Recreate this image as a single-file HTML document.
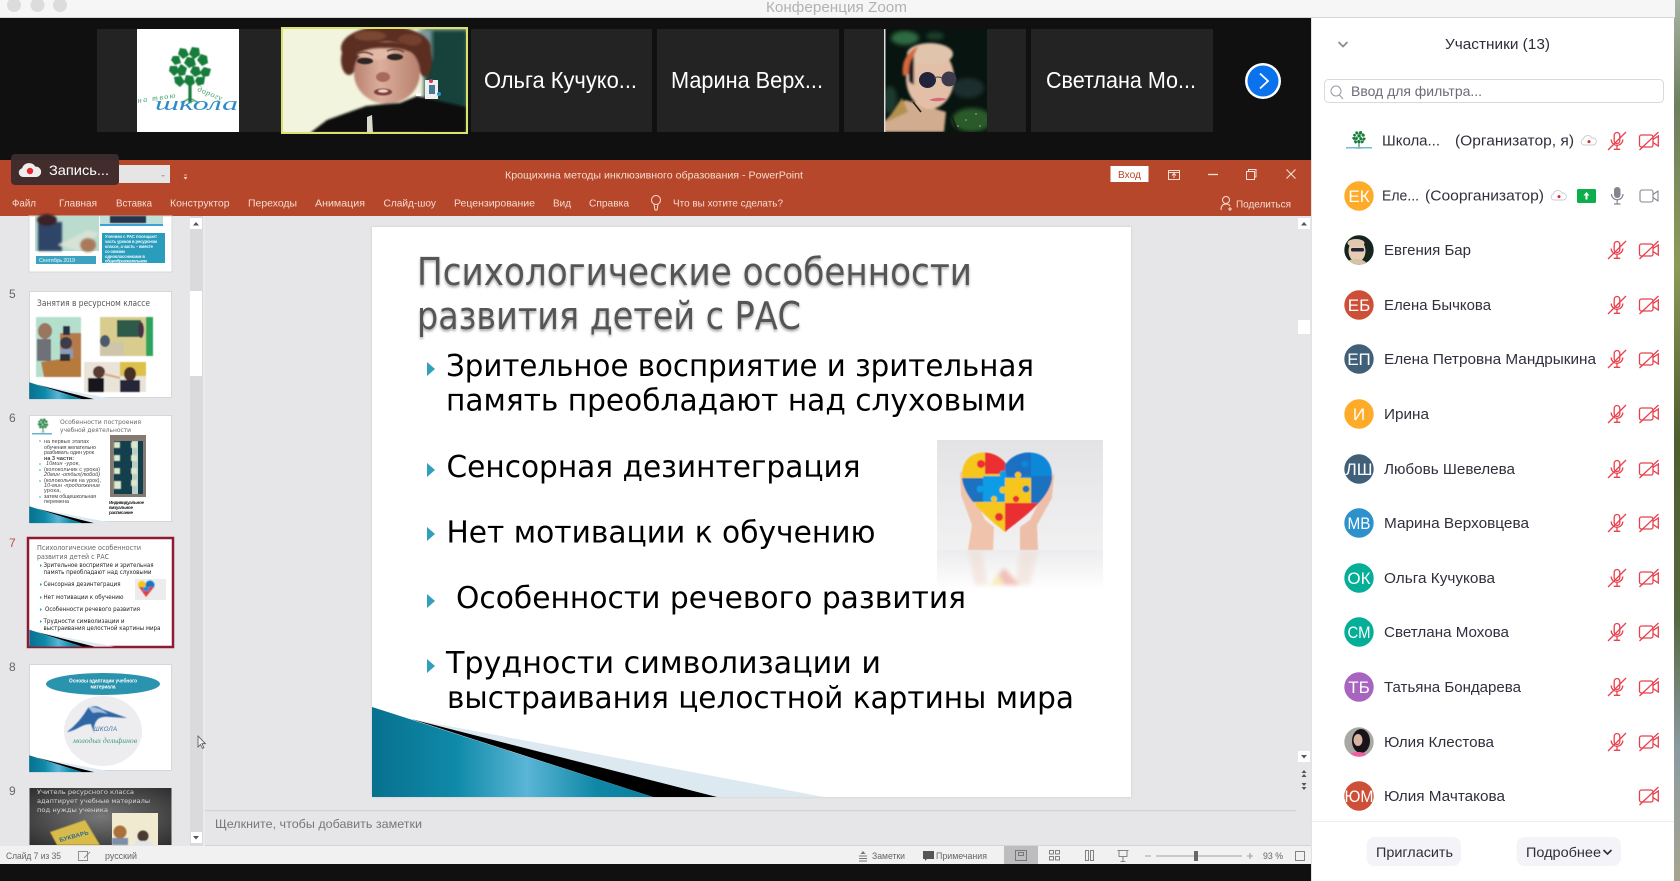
<!DOCTYPE html>
<html lang="ru"><head><meta charset="utf-8"><title>Конференция Zoom</title>
<style>
html,body{margin:0;padding:0;width:1680px;height:881px;overflow:hidden;background:#111}
svg{display:block;position:absolute;left:0;top:0;filter:blur(.35px)}
text{font-family:"Liberation Sans","Noto Sans CJK SC",sans-serif}
.dj{font-family:"DejaVu Sans","Liberation Sans",sans-serif}
.n{font-size:15px;fill:#30303c;transform:translateY(-.5px)}
.av{font-size:17px;fill:#fff;text-anchor:middle}
.tab{font-size:10.5px;fill:#f4dcd2;transform:translateY(-.5px)}
.st{font-size:9.5px;fill:#666}
.tile{font-size:23px;fill:#fff}
.b{fill:#000;font-size:30px}
.t{fill:#555;font-size:38px}
.s{font-size:6.3px;fill:#222}
.s6{font-size:5.4px;fill:#444}
</style></head><body>
<svg width="1680" height="881" viewBox="0 0 1680 881" xmlns="http://www.w3.org/2000/svg">
<defs>
<linearGradient id="teal" x1="0" y1="0" x2="1" y2="0"><stop offset="0" stop-color="#08708f"/><stop offset=".3" stop-color="#0f8aa9"/><stop offset=".55" stop-color="#5ab5d6"/><stop offset=".8" stop-color="#0f87a6"/><stop offset="1" stop-color="#0a7f9f"/></linearGradient>
<linearGradient id="wall" x1="0" y1="0" x2="0" y2="1"><stop offset="0" stop-color="#a8b3a5"/><stop offset=".12" stop-color="#6d7f5e"/><stop offset=".3" stop-color="#8d9a58"/><stop offset=".5" stop-color="#4e5e2e"/><stop offset=".7" stop-color="#56683f"/><stop offset=".85" stop-color="#8a9aa2"/><stop offset="1" stop-color="#a6a48e"/></linearGradient>
<linearGradient id="ph" x1="0" y1="0" x2="0" y2="1"><stop offset="0" stop-color="#e3e3e6"/><stop offset="1" stop-color="#f1f1f2"/></linearGradient>
<linearGradient id="refl" x1="0" y1="0" x2="0" y2="1"><stop offset="0" stop-color="#ececee"/><stop offset="1" stop-color="#fff"/></linearGradient>
<radialGradient id="dark9" cx=".5" cy=".5" r=".7"><stop offset="0" stop-color="#777"/><stop offset="1" stop-color="#2e2e2e"/></radialGradient>
<linearGradient id="skin" x1="0" y1="0" x2="1" y2="0"><stop offset="0" stop-color="#b98270"/><stop offset=".4" stop-color="#dcae9c"/><stop offset="1" stop-color="#b8806e"/></linearGradient>
<filter id="b1" x="-20%" y="-20%" width="140%" height="140%"><feGaussianBlur stdDeviation="1.1"/></filter>
<filter id="b2" x="-20%" y="-20%" width="140%" height="140%"><feGaussianBlur stdDeviation="2.2"/></filter>
<filter id="b5" x="-20%" y="-20%" width="140%" height="140%"><feGaussianBlur stdDeviation=".5"/></filter>
<filter id="sh" x="-5%" y="-20%" width="110%" height="150%"><feGaussianBlur in="SourceAlpha" stdDeviation="1.4"/><feOffset dy="2"/><feComponentTransfer><feFuncA type="linear" slope=".35"/></feComponentTransfer><feMerge><feMergeNode/><feMergeNode in="SourceGraphic"/></feMerge></filter>
<g id="mic" fill="none" stroke="#e8404c" stroke-width="1.300"><rect x="-2.800" y="-8.500" width="5.600" height="11" rx="2.800"/><path d="M-5.800-1.500a5.800 5.800 0 0 0 11.600 0M0 4.500V8M-3.200 8.300H3.200M-9 9 9-9"/></g>
<g id="cam" fill="none" stroke="#e8404c" stroke-width="1.300"><rect x="-9.500" y="-6" width="13.500" height="12" rx="2"/><path d="M4-1.500 9.300-5V5L4 1.500M-9.500 9 9.500-9"/></g>
<g id="cloud"><path d="M-5 4a3 3 0 0 1-.6-5.900 4.600 4.600 0 0 1 8.600-1A3.400 3.400 0 0 1 4.600 4Z" fill="#fff" stroke="#c9c9d4" stroke-width=".9"/><circle r="1.500" cy=".6" fill="#e5202e"/></g>
<g id="wedge"><polygon points="411,719 824,797 717,797" fill="#dde9f1"/><polygon points="411,719 717,797 653,797" fill="#000"/><polygon points="372,707 653,797 372,797" fill="url(#teal)"/></g>
<g id="tree">
<rect x="-1.600" y="8" width="3.200" height="26" fill="#167a3a"/>
<path d="M-1.500 30-9 34M1.500 30 9 34" stroke="#167a3a" stroke-width="1.200"/>
<g fill="#157d3a">
<path d="M-10-21-4-20-1-14-7-10-12-15Z"/><path d="M2-22 9-21 10-14 4-10-1-15Z"/><path d="M-17-13-11-13-9-6-15-4-19-9Z"/><path d="M-3-12 4-11 6-4-1-1-6-6Z"/><path d="M11-15 17-13 18-6 12-3 7-9Z"/>
<path d="M-20-3-13-3-11 3-16 7-21 2Z"/><path d="M-9-5-3-1-5 6-11 7-13 1Z"/><path d="M3-3 9-2 11 5 5 8 0 3Z"/><path d="M14-2 21 0 19 7 13 8 10 3Z"/><path d="M-16 8-9 7-5 13-10 18-15 14Z"/><path d="M-4 6 3 7 5 14 0 18-6 13Z"/><path d="M7 8 15 8 14 15 8 17 5 12Z"/>
</g></g>
</defs>

<rect width="1680" height="881" fill="#101010"/>
<rect x="1674" width="6" height="881" fill="url(#wall)"/>

<rect width="1675" height="18" fill="#f6f6f6"/>
<rect y="17" width="1675" height="1" fill="#d5d5d5"/>
<circle cx="14" cy="5" r="7" fill="#dcdcdc"/><circle cx="37.500" cy="5" r="7" fill="#dcdcdc"/><circle cx="60" cy="5" r="7" fill="#dcdcdc"/>
<text x="766" y="12" font-size="15" fill="#b2b2b2" textLength="141" lengthAdjust="spacingAndGlyphs">Конференция Zoom</text>

<rect x="0" y="18" width="1311" height="142" fill="#101010"/>
<rect x="97" y="29" width="184" height="103" fill="#232323"/>
<rect x="471" y="29" width="181" height="103" fill="#232323"/>
<rect x="657" y="29" width="182" height="103" fill="#232323"/>
<rect x="844" y="29" width="182" height="103" fill="#232323"/>
<rect x="1031" y="29" width="182" height="103" fill="#232323"/>

<rect x="137" y="29" width="102" height="103" fill="#fff"/>
<g filter="url(#b5)"><use href="#tree" x="190" y="69"/></g>
<text x="138" y="103" font-size="8" font-style="italic" fill="#3e9c62" style="font-family:'Liberation Serif',serif" transform="rotate(-8 138 103)" textLength="38">на твою</text>
<text x="197" y="91" font-size="8" font-style="italic" fill="#3e9c62" style="font-family:'Liberation Serif',serif" transform="rotate(22 197 91)" textLength="26">дорогу</text>
<text x="155" y="110" font-size="19" font-style="italic" fill="#2f8bc8" style="font-family:'Liberation Serif',serif" textLength="83" lengthAdjust="spacingAndGlyphs">школа</text>

<!-- active video -->
<rect x="282" y="28" width="185" height="105" fill="#f3f4de"/>
<clipPath id="v1"><rect x="283" y="29" width="183" height="103"/></clipPath>
<g clip-path="url(#v1)">
<rect x="424" y="29" width="44" height="103" fill="#17423a" filter="url(#b2)"/>
<rect x="418" y="29" width="14" height="30" fill="#7c9a9c" filter="url(#b2)"/>
<g filter="url(#b1)">
<ellipse cx="386" cy="48" rx="45" ry="22" fill="#5c2f22"/>
<ellipse cx="349" cy="60" rx="8" ry="15" fill="#5c2f22"/>
<ellipse cx="425" cy="60" rx="7" ry="17" fill="#5c2f22"/>
<ellipse cx="370" cy="36" rx="16" ry="5" fill="#7a4632"/>
<ellipse cx="410" cy="40" rx="12" ry="6" fill="#74402e"/>
<ellipse cx="387" cy="73" rx="33" ry="31" fill="url(#skin)"/>
<ellipse cx="375" cy="52" rx="18" ry="8" fill="#e2b8a6"/>
</g>
<path d="M352 50Q362 38 385 42 410 40 420 55 402 47 385 48 364 47 352 58Z" fill="#5c2f22" filter="url(#b1)"/>
<g filter="url(#b5)">
<ellipse cx="365" cy="61" rx="8" ry="3.200" fill="#2e2624"/>
<ellipse cx="395" cy="57" rx="8" ry="3.200" fill="#2e2624"/>
<path d="M356 54q9-4 17 1M387 51q9-4 17 1" stroke="#6a4436" stroke-width="1.500" fill="none"/>
<ellipse cx="383" cy="77" rx="7" ry="5" fill="#a86a5b"/>
<ellipse cx="383" cy="92" rx="9" ry="3.500" fill="#7f3f38"/>
<ellipse cx="383" cy="91" rx="5" ry="1.500" fill="#f1d8cc"/>
</g>
<g filter="url(#b1)">
<polygon points="310,133 327,120 366,106 385,104 400,103 417,96 466,107 466,133" fill="#0e0d10"/>
</g>
<polygon points="367,117 372,115 373,133 367,133" fill="#d9d9cd"/>
<rect x="425" y="80" width="13" height="19" fill="#eef0f0"/>
<circle cx="431" cy="81" r="2" fill="#d83a50"/>
<circle cx="439" cy="94" r="2" fill="#2a90d0"/>
<rect x="429" y="85" width="6" height="9" fill="#4a7a92"/>
<rect x="416" y="93" width="5" height="3" fill="#fff"/>
</g>
<rect x="282" y="28" width="185" height="105" fill="none" stroke="#dbe36c" stroke-width="2"/>

<text class="tile" x="484" y="88" textLength="153" lengthAdjust="spacingAndGlyphs">Ольга Кучуко...</text>
<text class="tile" x="671" y="88" textLength="152" lengthAdjust="spacingAndGlyphs">Марина Верх...</text>
<text class="tile" x="1046" y="88" textLength="150" lengthAdjust="spacingAndGlyphs">Светлана Мо...</text>

<!-- woman photo -->
<clipPath id="v2"><rect x="884" y="29" width="103" height="103"/></clipPath>
<g clip-path="url(#v2)">
<rect x="884" y="29" width="103" height="103" fill="#08140f"/>
<g filter="url(#b2)">
<ellipse cx="905" cy="38" rx="14" ry="7" fill="#2f6a42"/>
<ellipse cx="935" cy="36" rx="9" ry="4" fill="#1f3d2c"/>
<ellipse cx="968" cy="88" rx="16" ry="10" fill="#1a2e2e"/>
<ellipse cx="972" cy="120" rx="20" ry="12" fill="#2a5a2a"/>
<ellipse cx="890" cy="100" rx="7" ry="14" fill="#1c3a2e"/>
</g>
<g fill="#9fbf8f"><circle cx="966" cy="120" r=".8"/><circle cx="976" cy="114" r=".8"/><circle cx="958" cy="126" r=".8"/><circle cx="980" cy="126" r=".8"/></g>
<g filter="url(#b1)">
<polygon points="884,132 884,122 905,100 920,104 946,112 944,132" fill="#d2ac8e"/>
<path d="M902 98 886 122 908 112Z" fill="#b2914f"/>
<ellipse cx="930" cy="78" rx="24" ry="31" fill="#e2bfa6"/>
<ellipse cx="930" cy="54" rx="23" ry="11" fill="#e0c4ac"/>
<path d="M903 76Q900 56 918 46L913 58 909 74Z" fill="#d5683c"/>
<path d="M909 82Q907 62 914 56L914 85Z" fill="#1f1d22"/>
</g>
<ellipse cx="927.500" cy="80" rx="8.500" ry="8" fill="#22253a"/>
<ellipse cx="949" cy="79" rx="7.500" ry="7.500" fill="#3d3a4c"/>
<path d="M934 78q4-2 8 0" stroke="#444" fill="none"/>
<path d="M929 100q9 3 18-1-9-3-18 1Z" fill="#d46a7a"/>
<path d="M913 102l8 10M952 117l6 15" stroke="#1a1a14" stroke-width="1.500"/>
<rect x="884" y="29" width="1.500" height="103" fill="#ddd"/>
</g>

<circle cx="1263" cy="81" r="18" fill="#fff"/>
<circle cx="1263" cy="81" r="15.500" fill="#0b72ed"/>
<path d="M1260 73.500 1268 81 1260 88.500" fill="none" stroke="#fff" stroke-width="1.800"/>

<!-- PowerPoint -->
<rect x="0" y="160" width="1311" height="56" fill="#b7472a"/>
<rect x="0" y="216" width="1311" height="630" fill="#e6e6e8"/>
<rect x="0" y="846" width="1311" height="18" fill="#f1f1f1"/>
<rect x="0" y="864" width="1311" height="17" fill="#101010"/>

<rect x="119" y="165" width="51" height="18" fill="#e5e5e5"/>
<path d="M161 175l2 2 2-2" fill="#aaa"/>
<path d="M184 175h3M184 177l1.500 2 1.500-2" fill="#f0d5ca" stroke="#f0d5ca" stroke-width=".8"/>
<rect x="11" y="154" width="108" height="31" rx="4" fill="#3c2c2d" opacity=".94"/>
<path d="M23 177a4.500 4.500 0 0 1-1-8.800 7.500 7.500 0 0 1 13.500-1.500 5 5 0 0 1 1 10.300Z" fill="#eee"/>
<circle cx="30" cy="171" r="3.200" fill="#e8262f"/>
<text x="49" y="175" font-size="14" fill="#fff" textLength="60" lengthAdjust="spacingAndGlyphs">Запись...</text>

<text class="tab" x="505" y="179" textLength="298" lengthAdjust="spacingAndGlyphs">Крощихина методы инклюзивного образования  -  PowerPoint</text>
<rect x="1110.500" y="166" width="38" height="16" fill="#fff"/>
<text x="1118" y="178" font-size="10.500" fill="#b7472a" textLength="23" lengthAdjust="spacingAndGlyphs">Вход</text>
<g fill="none" stroke="#f6e0d6" stroke-width="1">
<rect x="1168.500" y="170.500" width="11" height="9"/><path d="M1168.500 172.500h11M1174 178v-4M1172 175.500l2-2 2 2"/>
<path d="M1208 174.500h10" stroke-width="1.300"/>
<rect x="1246.500" y="171.500" width="8" height="8"/><path d="M1248.500 171.500v-2h7.500v7.500h-1.500"/>
<path d="M1286.500 169.500l9 9M1295.500 169.500l-9 9" stroke-width="1.100"/>
<circle cx="656" cy="200" r="4.500"/><path d="M654 204.500 655 210h2l1-5.500"/>
<circle cx="1226" cy="200" r="3.500"/><path d="M1221 210q0-6 5-6 3 0 4 2M1230 207v4M1228 209h4"/>
</g>
<text class="tab" x="12" y="207" textLength="24" lengthAdjust="spacingAndGlyphs">Файл</text>
<text class="tab" x="59" y="207" textLength="38" lengthAdjust="spacingAndGlyphs">Главная</text>
<text class="tab" x="116" y="207" textLength="36" lengthAdjust="spacingAndGlyphs">Вставка</text>
<text class="tab" x="170" y="207" textLength="59.500" lengthAdjust="spacingAndGlyphs">Конструктор</text>
<text class="tab" x="248" y="207" textLength="49" lengthAdjust="spacingAndGlyphs">Переходы</text>
<text class="tab" x="315" y="207" textLength="50" lengthAdjust="spacingAndGlyphs">Анимация</text>
<text class="tab" x="383.500" y="207" textLength="52.500" lengthAdjust="spacingAndGlyphs">Слайд-шоу</text>
<text class="tab" x="454" y="207" textLength="81" lengthAdjust="spacingAndGlyphs">Рецензирование</text>
<text class="tab" x="553" y="207" textLength="18" lengthAdjust="spacingAndGlyphs">Вид</text>
<text class="tab" x="589" y="207" textLength="40" lengthAdjust="spacingAndGlyphs">Справка</text>
<text class="tab" x="673" y="207" textLength="110" lengthAdjust="spacingAndGlyphs">Что вы хотите сделать?</text>
<text class="tab" x="1236" y="208" textLength="55" lengthAdjust="spacingAndGlyphs">Поделиться</text>

<!-- left scrollbar -->
<rect x="190" y="216" width="13" height="630" fill="#dadadc"/>
<rect x="190" y="218" width="12" height="11" fill="#fff"/><path d="M193 225.500h6l-3-3.500Z" fill="#555"/>
<rect x="190" y="291" width="12" height="85" fill="#fff"/>
<rect x="191" y="832" width="11" height="11" fill="#fff"/><path d="M193 836h6l-3 3.500Z" fill="#555"/>
<rect x="203" y="216" width="2" height="630" fill="#eaeaec"/>

<g font-size="12" fill="#666">
<text x="9" y="298">5</text><text x="9" y="422">6</text><text x="9" y="547" fill="#c0503c">7</text><text x="9" y="671">8</text><text x="9" y="795">9</text>
</g>

<!-- slide 4 thumb -->
<rect x="29" y="216" width="143" height="56" fill="#fff" stroke="#d8d8d8"/>
<rect x="35" y="216" width="64" height="35" fill="#b9dccf"/>
<g filter="url(#b1)"><rect x="38" y="222" width="24" height="29" fill="#2f4468"/><ellipse cx="47" cy="220" rx="10" ry="6" fill="#3a2028"/><polygon points="58,245 88,230 99,233 80,251" fill="#d6e2d6"/><ellipse cx="88" cy="245" rx="8" ry="7" fill="#a9795a"/></g>
<rect x="100" y="216" width="63" height="10" fill="#bfe0d8"/><rect x="110" y="216" width="36" height="7" fill="#25344a" filter="url(#b5)"/><rect x="100" y="224" width="63" height="2" fill="#3ba3d8"/>
<rect x="102" y="233" width="63" height="30" fill="#2a9dbd"/>
<g font-size="4.200" font-weight="bold" fill="#e9f7fb"><text x="105" y="238" textLength="52">Ученики с РАС посещают</text><text x="105" y="243" textLength="52">часть уроков в ресурсном</text><text x="105" y="248" textLength="48">классе, а часть – вместе</text><text x="105" y="253" textLength="20">со своими</text><text x="105" y="258" textLength="40">одноклассниками в</text><text x="105" y="262.500" textLength="42">общеобразовательном</text></g>
<rect x="36" y="256" width="60" height="8" fill="#3ba3c0"/><text x="39" y="262" font-size="5.500" fill="#e9f7fb" textLength="36">Сентябрь 2019</text>

<!-- slide 5 -->
<rect x="29.500" y="291.500" width="142" height="106" fill="#fff" stroke="#d6d6d6"/>
<text x="37" y="306" font-size="8.500" fill="#555" textLength="113" lengthAdjust="spacingAndGlyphs" class="dj">Занятия в ресурсном классе</text>
<g filter="url(#b5)">
<rect x="36" y="317" width="45" height="60" fill="#b4dfcd"/><rect x="60" y="333" width="21" height="24" fill="#b47a4a"/><polygon points="41,362 81,356 81,377 44,377" fill="#b67a3e"/><ellipse cx="45" cy="331" rx="7" ry="8" fill="#9a7460"/><rect x="37" y="339" width="14" height="22" fill="#6f6f78"/><ellipse cx="66" cy="343" rx="6" ry="6" fill="#3a3a48"/><rect x="60" y="349" width="13" height="9" fill="#8a9cb6"/><rect x="63" y="326" width="7" height="9" fill="#25304a"/><rect x="60" y="354" width="10" height="7" fill="#333"/>
<rect x="100" y="317" width="53" height="39" fill="#d8cd8e"/><rect x="117" y="320" width="24" height="17" fill="#2f5a4a"/><rect x="146" y="317" width="7" height="39" fill="#2fa25f"/><rect x="100" y="342" width="24" height="14" fill="#cfc6aa"/><ellipse cx="105" cy="341" rx="5" ry="6" fill="#4a5a6c"/><ellipse cx="141" cy="330" rx="3" ry="8" fill="#4a3048"/>
<rect x="84" y="362" width="62" height="30" fill="#e9e3d8"/><rect x="120" y="362" width="26" height="14" fill="#dcc04a"/><ellipse cx="99" cy="372" rx="6" ry="6" fill="#5a3a30"/><rect x="88" y="378" width="16" height="14" fill="#17171e"/><ellipse cx="130" cy="374" rx="6" ry="7" fill="#4a2f28"/><rect x="120" y="380" width="20" height="12" fill="#26263a"/><path d="M104 374l16 4" stroke="#d9a88a" stroke-width="2"/>
</g>
<use href="#wedge" transform="translate(29.200 292) scale(.188 .188) translate(-372 -227)"/>

<!-- slide 6 -->
<rect x="29.500" y="415.500" width="142" height="106" fill="#fff" stroke="#d6d6d6"/>
<g filter="url(#b5)"><use href="#tree" transform="translate(43 424) scale(.25)"/></g>
<rect x="32" y="433" width="20" height="1.500" fill="#6ab0d0"/>
<g class="dj" font-size="6.500" fill="#666"><text class="dj" x="60" y="424" textLength="81" lengthAdjust="spacingAndGlyphs">Особенности построения</text><text class="dj" x="60" y="432" textLength="71" lengthAdjust="spacingAndGlyphs">учебной деятельности</text></g>
<g fill="#3aa5bf"><circle cx="40" cy="441" r=".8"/><circle cx="40" cy="464" r=".8"/><circle cx="40" cy="470" r=".8"/><circle cx="40" cy="481" r=".8"/><circle cx="40" cy="497" r=".8"/></g>
<text class="s6" x="44" y="443" textLength="45">на первых этапах</text>
<text class="s6" x="44" y="449" textLength="52">обучения желательно</text>
<text class="s6" x="44" y="454" textLength="50">разбивать один урок</text>
<text class="s6" x="44" y="460" font-weight="bold" textLength="30" fill="#222">на 3 части:</text>
<text class="s6" x="46" y="465" textLength="34" font-style="italic">10мин -урок,</text>
<text class="s6" x="44" y="471" textLength="56">(колокольчик с урока)</text>
<text class="s6" x="44" y="476" textLength="56" font-style="italic">20мин -отдых(любой)</text>
<text class="s6" x="44" y="482" textLength="57">(колокольчик на урок),</text>
<text class="s6" x="44" y="487" textLength="56" font-style="italic">10-мин -продолжение</text>
<text class="s6" x="44" y="492" textLength="17">урока,</text>
<text class="s6" x="44" y="498" textLength="52">затем общешкольная</text>
<text class="s6" x="44" y="503" textLength="25">перемена</text>
<rect x="110" y="435" width="36" height="62" fill="#857a72"/><rect x="114" y="441" width="29" height="53" fill="#14404e"/><rect x="132" y="441" width="6" height="53" fill="#b8cfc8"/>
<g fill="#dfe8cc" filter="url(#b5)"><rect x="114" y="442" width="6" height="6"/><rect x="131" y="442" width="6" height="6"/><rect x="114" y="455" width="6" height="6"/><rect x="131" y="455" width="6" height="6"/><rect x="114" y="468" width="6" height="6"/><rect x="131" y="468" width="6" height="6"/><rect x="114" y="481" width="7" height="8"/><rect x="131" y="480" width="6" height="6"/></g>
<g font-size="4.600" font-weight="bold" fill="#222"><text x="109" y="504" textLength="35">Индивидуальное</text><text x="109" y="509" textLength="24">визуальное</text><text x="109" y="514" textLength="24">расписание</text></g>
<use href="#wedge" transform="translate(29.200 416) scale(.188 .188) translate(-372 -227)"/>

<!-- slide 7 -->
<rect x="28" y="538" width="145" height="109" fill="#fff" stroke="#8c1c33" stroke-width="2.500"/>
<g class="dj" fill="#666" font-size="7"><text class="dj" x="37" y="550" textLength="104" lengthAdjust="spacingAndGlyphs">Психологические особенности</text><text class="dj" x="37" y="559" textLength="72" lengthAdjust="spacingAndGlyphs">развития детей с РАС</text></g>
<g fill="#31a0bc"><path d="M40 564l2 1.500-2 1.500ZM40 583l2 1.500-2 1.500ZM40 596l2 1.500-2 1.500ZM40 608l2 1.500-2 1.500ZM40 620l2 1.500-2 1.500Z"/></g>
<text class="s dj" x="43.500" y="567" textLength="110" lengthAdjust="spacingAndGlyphs">Зрительное восприятие и зрительная</text>
<text class="s dj" x="43.500" y="574" textLength="108" lengthAdjust="spacingAndGlyphs">память преобладают над слуховыми</text>
<text class="s dj" x="43.500" y="586" textLength="77" lengthAdjust="spacingAndGlyphs">Сенсорная дезинтеграция</text>
<text class="s dj" x="43.500" y="599" textLength="80" lengthAdjust="spacingAndGlyphs">Нет мотивации к обучению</text>
<text class="s dj" x="45" y="611" textLength="95" lengthAdjust="spacingAndGlyphs">Особенности речевого развития</text>
<text class="s dj" x="43.500" y="623" textLength="81" lengthAdjust="spacingAndGlyphs">Трудности символизации и</text>
<text class="s dj" x="43.500" y="630" textLength="117" lengthAdjust="spacingAndGlyphs">выстраивания целостной картины мира</text>
<rect x="135" y="579" width="31" height="21" fill="#ececee"/>
<g filter="url(#b5)"><circle cx="142" cy="585" r="4" fill="#f5c518"/><circle cx="150" cy="585" r="4.500" fill="#1576c4"/><polygon points="139,587 154,587 146,597" fill="#e33d3d"/><rect x="143" y="587" width="6" height="4" fill="#1a8cd8"/></g>
<use href="#wedge" transform="translate(29.500 539.500) scale(.188 .188) translate(-372 -227)"/>

<!-- slide 8 -->
<rect x="29.500" y="664.500" width="142" height="106" fill="#fff" stroke="#d6d6d6"/>
<ellipse cx="103" cy="684" rx="57" ry="11" fill="#2a93ad"/>
<g font-size="5" font-weight="bold" fill="#fff" text-anchor="middle"><text x="103" y="682.500" textLength="68" lengthAdjust="spacingAndGlyphs">Основы адаптации учебного</text><text x="103" y="688.500" textLength="25" lengthAdjust="spacingAndGlyphs">материала</text></g>
<ellipse cx="103" cy="731" rx="39" ry="35" fill="#ededf0"/>
<g filter="url(#b5)"><path d="M67 732Q80 722 88 708q8-4 14 1l25 9-17-1q-8-1-12 2-5 5-4 14l-3-9q-6 0-11 3-5 3-12 5Z" fill="#2e66a6"/><path d="M88 707q10-1 20 7-9-3-15-1Z" fill="#a9c4e0"/></g>
<text x="94" y="731" font-size="6" font-style="italic" fill="#3a6fa0" textLength="23">ШКОЛА</text>
<text x="73" y="743" font-size="7.500" font-style="italic" fill="#3c9a78" style="font-family:'Liberation Serif',serif" textLength="64" lengthAdjust="spacingAndGlyphs">молодых дельфинов</text>
<use href="#wedge" transform="translate(29.200 665) scale(.188 .188) translate(-372 -227)"/>

<!-- slide 9 -->
<rect x="29.500" y="788" width="142" height="57" fill="url(#dark9)"/>
<g class="dj" font-size="6.500" fill="#d5d5d5"><text class="dj" x="37" y="794" textLength="97" lengthAdjust="spacingAndGlyphs">Учитель ресурсного класса</text><text class="dj" x="37" y="803" textLength="113" lengthAdjust="spacingAndGlyphs">адаптирует учебные материалы</text><text class="dj" x="37" y="812" textLength="71" lengthAdjust="spacingAndGlyphs">под нужды ученика</text></g>
<polygon points="50,832 85,820 100,845 57,845" fill="#d8bb4a" filter="url(#b5)"/>
<text x="60" y="842" font-size="6" font-weight="bold" fill="#2a6a9a" transform="rotate(-15 60 842)" textLength="30">БУКВАРЬ</text>
<rect x="112" y="813" width="46" height="32" fill="#f0ebd0"/>
<g filter="url(#b5)"><circle cx="120" cy="832" r="6.500" fill="#a96f3a"/><rect x="112" y="838" width="16" height="7" fill="#7e8ea8"/><circle cx="143" cy="836" r="5.500" fill="#4a3a30"/><rect x="135" y="841" width="16" height="4" fill="#e0e5ea"/></g>
<path d="M198 736v11l2.500-2.500 2 4 1.500-.8-2-4h3.500Z" fill="#eee" stroke="#555" stroke-width=".8"/>

<!-- status bar -->
<text class="st" x="6" y="859" textLength="55" lengthAdjust="spacingAndGlyphs">Слайд 7 из 35</text>
<g fill="none" stroke="#777" stroke-width=".8"><rect x="78.500" y="851.500" width="9" height="9"/><path d="M84 858l6-6"/></g>
<text class="st" x="105" y="859" textLength="32" lengthAdjust="spacingAndGlyphs">русский</text>
<g stroke="#777" stroke-width=".9"><path d="M859 856h8M859 858.500h8M859 861h8"/></g><path d="M860.500 854l2.500-3 2.500 3Z" fill="#777"/>
<text class="st" x="872" y="859" textLength="33" lengthAdjust="spacingAndGlyphs">Заметки</text>
<path d="M923 851h11v8h-7l-2 2v-2h-2Z" fill="#555"/>
<text class="st" x="936" y="859" textLength="51" lengthAdjust="spacingAndGlyphs">Примечания</text>
<rect x="1004" y="846" width="34" height="18" fill="#bdbdbf"/>
<g fill="none" stroke="#666" stroke-width=".8"><rect x="1015.500" y="850.500" width="11" height="10"/><rect x="1018.500" y="852.500" width="5" height="3"/>
<rect x="1049.500" y="850.500" width="4" height="3.500"/><rect x="1055.500" y="850.500" width="4" height="3.500"/><rect x="1049.500" y="856.500" width="4" height="3.500"/><rect x="1055.500" y="856.500" width="4" height="3.500"/>
<rect x="1085.500" y="850.500" width="3" height="10"/><rect x="1090.500" y="850.500" width="3" height="10"/>
<path d="M1117.500 850.500h11M1119 850.500v6h8v-6M1123 856.500v5M1120.500 861.500h5"/>
<path d="M1145 856h6M1156 856h86M1247 856h6M1250 853v6" stroke="#888"/>
<rect x="1295.500" y="851.500" width="9" height="9"/></g>
<rect x="1194" y="851" width="4" height="10" fill="#666"/>
<text class="st" x="1263" y="859" textLength="20" lengthAdjust="spacingAndGlyphs">93 %</text>

<!-- main scrollbar -->
<rect x="1296" y="216" width="15" height="630" fill="#e6e6e8"/>
<rect x="1298" y="218" width="12" height="11" fill="#fff"/><path d="M1301 225.500h6l-3-3.500Z" fill="#555"/>
<rect x="1298" y="320" width="12" height="14" fill="#fff"/>
<rect x="1298" y="751" width="12" height="11" fill="#fff"/><path d="M1301 755h6l-3 3.500Z" fill="#555"/>
<path d="M1301.500 773l2.500-3 2.500 3ZM1301.500 777l2.500-3 2.500 3ZM1301.500 783l2.500 3 2.500-3ZM1301.500 787l2.500 3 2.500-3Z" fill="#555"/>

<!-- main slide -->
<rect x="372" y="227" width="759" height="570" fill="#fff" style="filter:drop-shadow(0 0 1px #c8c8c8)"/>
<g filter="url(#sh)"><text class="dj t" x="417" y="285" textLength="555" lengthAdjust="spacingAndGlyphs">Психологические особенности</text>
<text class="dj t" x="417" y="329" textLength="384" lengthAdjust="spacingAndGlyphs">развития детей с РАС</text></g>
<g fill="#31a0bc"><path d="M427 362l8 7-8 7ZM427 463l8 7-8 7ZM427 527l8 7-8 7ZM427 594l8 7-8 7ZM427 659l8 7-8 7Z"/></g>
<text class="dj b" x="446" y="376" textLength="588" lengthAdjust="spacingAndGlyphs">Зрительное восприятие и зрительная</text>
<text class="dj b" x="446" y="410.500" textLength="580" lengthAdjust="spacingAndGlyphs">память преобладают над слуховыми</text>
<text class="dj b" x="446.500" y="477" textLength="414" lengthAdjust="spacingAndGlyphs">Сенсорная дезинтеграция</text>
<text class="dj b" x="446.500" y="542.500" textLength="429" lengthAdjust="spacingAndGlyphs">Нет мотивации к обучению</text>
<text class="dj b" x="456" y="608" textLength="510" lengthAdjust="spacingAndGlyphs">Особенности речевого развития</text>
<text class="dj b" x="446" y="673" textLength="435" lengthAdjust="spacingAndGlyphs">Трудности символизации и</text>
<text class="dj b" x="447" y="708" textLength="627" lengthAdjust="spacingAndGlyphs">выстраивания целостной картины мира</text>

<!-- heart -->
<rect x="937" y="440" width="166" height="110" fill="url(#ph)"/>
<rect x="937" y="550" width="166" height="40" fill="url(#refl)"/>
<g opacity=".45" filter="url(#b2)"><polygon points="968,551 982,551 988,585 975,585" fill="#f0d5c8"/><polygon points="1020,551 1038,551 1030,585 1015,585" fill="#f0d5c8"/><polygon points="1004,568 990,585 1020,585" fill="#e87a6a"/><polygon points="998,574 990,585 1004,585" fill="#f5d86a"/></g>
<g filter="url(#b5)">
<path d="M968 550 972 525 961 495 960 473Q960 470 964 474L985 520 994 527 993 550Z" fill="#f0c3ac"/>
<path d="M1038 550 1037 525 1052 498 1054 476Q1056 472 1052 476L1030 520 1020 527 1020 550Z" fill="#eebfa8"/>
<clipPath id="heart"><path d="M1006 464C996 448 962 446 962 476 962 498 990 520 1005 532 1022 518 1052 498 1052 476 1052 446 1016 448 1006 464Z"/></clipPath>
<g clip-path="url(#heart)">
<rect x="960" y="446" width="47" height="40" fill="#f7c61d"/>
<rect x="985" y="446" width="24" height="28" fill="#ea2f33"/>
<rect x="1005" y="446" width="50" height="60" fill="#0f87d8"/>
<rect x="1005" y="446" width="26" height="30" fill="#1c6fc2"/>
<rect x="960" y="478" width="25" height="24" fill="#1f72bf"/>
<rect x="983" y="476" width="24" height="26" fill="#0f9ce6"/>
<rect x="1005" y="478" width="26" height="25" fill="#f7c61d"/>
<rect x="1031" y="476" width="24" height="28" fill="#1f72bf"/>
<rect x="975" y="502" width="31" height="34" fill="#f7c61d"/>
<rect x="1005" y="503" width="40" height="34" fill="#ea2f33"/>
</g>
<circle cx="981" cy="464" r="4" fill="#ea2f33"/><circle cx="1003" cy="474" r="3.500" fill="#0f9ce6"/><circle cx="1025" cy="464" r="3.500" fill="#0f87d8"/><circle cx="1018" cy="475" r="3.200" fill="#f7c61d"/><circle cx="980" cy="489" r="3.500" fill="#0f9ce6"/><circle cx="1003" cy="490" r="3.500" fill="#f7c61d"/><circle cx="1026" cy="489" r="3.500" fill="#1f72bf"/><circle cx="994" cy="499" r="3" fill="#f7c61d"/><circle cx="1016" cy="499" r="3.200" fill="#ea2f33"/><circle cx="999" cy="517" r="4" fill="#ea2f33"/>
</g>

<use href="#wedge"/>
<rect x="205" y="810" width="1091" height="1.200" fill="#d4d4d6"/>
<rect x="205" y="845" width="1106" height="1" fill="#d4d4d6"/>
<text x="215" y="828" font-size="12" fill="#777" textLength="207" lengthAdjust="spacingAndGlyphs">Щелкните, чтобы добавить заметки</text>

<!-- participants panel -->
<rect x="1311" y="18" width="363" height="863" fill="#fff"/>
<rect x="1311" y="18" width="1" height="863" fill="#e2e2e2"/>
<path d="M1338.500 42l4.500 4.500 4.500-4.500" fill="none" stroke="#8c8c96" stroke-width="1.800"/>
<text x="1445" y="49" font-size="15" fill="#2e2e38" textLength="105" lengthAdjust="spacingAndGlyphs">Участники (13)</text>
<rect x="1324.500" y="79.500" width="339" height="23" rx="4" fill="#fff" stroke="#d8d8de"/>
<circle cx="1336" cy="91" r="5" fill="none" stroke="#9a9aa4" stroke-width="1"/><path d="M1339.500 95l3.500 4" stroke="#9a9aa4"/>
<text x="1351" y="96" font-size="14" fill="#6c6c78" textLength="131" lengthAdjust="spacingAndGlyphs">Ввод для фильтра...</text>

<g><use href="#tree" transform="translate(1359 138) scale(.32)"/><rect x="1346" y="147" width="26" height="1.500" fill="#78b8d8"/></g>
<text class="n" x="1382" y="146" textLength="58" lengthAdjust="spacingAndGlyphs">Школа...</text>
<text class="n" x="1455" y="146" textLength="119" lengthAdjust="spacingAndGlyphs">(Организатор, я)</text>
<use href="#cloud" x="1589" y="141"/><use href="#mic" x="1617" y="141"/><use href="#cam" x="1649" y="141"/>

<circle cx="1359" cy="196" r="14.700" fill="#fdab29"/><text class="av" x="1359" y="202">ЕК</text>
<text class="n" x="1382" y="201" textLength="37" lengthAdjust="spacingAndGlyphs">Еле...</text>
<text class="n" x="1425" y="201" textLength="119" lengthAdjust="spacingAndGlyphs">(Соорганизатор)</text>
<use href="#cloud" x="1559" y="196"/>
<rect x="1577" y="189" width="19" height="14" rx="1.500" fill="#0bae4a"/><path d="M1586.500 192l3 3.500h-2v4h-2v-4h-2Z" fill="#fff"/>
<g><rect x="1614" y="187" width="6.500" height="11" rx="3.200" fill="#85858f"/><path d="M1611.500 194a5.700 5.700 0 0 0 11.500 0M1617.200 200v3.500M1614 204h6.500" fill="none" stroke="#85858f" stroke-width="1.200"/></g>
<g fill="none" stroke="#85858f" stroke-width="1.100"><rect x="1640" y="190" width="13" height="12" rx="2"/><path d="M1653 194.500l5-3.500v10l-5-3.500"/></g>

<clipPath id="a3"><circle cx="1359" cy="250" r="14.700"/></clipPath>
<g clip-path="url(#a3)"><rect x="1344" y="235" width="30" height="30" fill="#15241f"/><ellipse cx="1357" cy="251" rx="8.500" ry="11" fill="#e8cdb5"/><ellipse cx="1356" cy="243" rx="8.500" ry="4" fill="#dfc8ae"/><rect x="1351" y="248" width="13" height="3.500" rx="1.500" fill="#22253a"/><ellipse cx="1356" cy="265" rx="11" ry="6" fill="#d8c2a6"/></g>
<text class="n" x="1384" y="255.500" textLength="87" lengthAdjust="spacingAndGlyphs">Евгения Бар</text>
<use href="#mic" x="1617" y="250"/><use href="#cam" x="1649" y="250"/>

<circle cx="1359" cy="305" r="14.700" fill="#cd4f38"/><text class="av" x="1359" y="311">ЕБ</text>
<text class="n" x="1384" y="310.500" textLength="107" lengthAdjust="spacingAndGlyphs">Елена Бычкова</text>
<use href="#mic" x="1617" y="305"/><use href="#cam" x="1649" y="305"/>

<circle cx="1359" cy="359" r="14.700" fill="#40607a"/><text class="av" x="1359" y="365">ЕП</text>
<text class="n" x="1384" y="364.500" textLength="212" lengthAdjust="spacingAndGlyphs">Елена Петровна Мандрыкина</text>
<use href="#mic" x="1617" y="359"/><use href="#cam" x="1649" y="359"/>

<circle cx="1359" cy="414" r="14.700" fill="#fdab29"/><text class="av" x="1359" y="420">И</text>
<text class="n" x="1384" y="419.500" textLength="45" lengthAdjust="spacingAndGlyphs">Ирина</text>
<use href="#mic" x="1617" y="414"/><use href="#cam" x="1649" y="414"/>

<circle cx="1359" cy="469" r="14.700" fill="#40607a"/><text class="av" x="1359" y="475" textLength="27" lengthAdjust="spacingAndGlyphs">ЛШ</text>
<text class="n" x="1384" y="474.500" textLength="131" lengthAdjust="spacingAndGlyphs">Любовь Шевелева</text>
<use href="#mic" x="1617" y="469"/><use href="#cam" x="1649" y="469"/>

<circle cx="1359" cy="523" r="14.700" fill="#2d92cc"/><text class="av" x="1359" y="529" textLength="23" lengthAdjust="spacingAndGlyphs">МВ</text>
<text class="n" x="1384" y="528.500" textLength="145" lengthAdjust="spacingAndGlyphs">Марина Верховцева</text>
<use href="#mic" x="1617" y="523"/><use href="#cam" x="1649" y="523"/>

<circle cx="1359" cy="578" r="14.700" fill="#04ae97"/><text class="av" x="1359" y="584">ОК</text>
<text class="n" x="1384" y="583.500" textLength="111" lengthAdjust="spacingAndGlyphs">Ольга Кучукова</text>
<use href="#mic" x="1617" y="578"/><use href="#cam" x="1649" y="578"/>

<circle cx="1359" cy="632" r="14.700" fill="#04ae97"/><text class="av" x="1359" y="638" textLength="23" lengthAdjust="spacingAndGlyphs">СМ</text>
<text class="n" x="1384" y="637.500" textLength="125" lengthAdjust="spacingAndGlyphs">Светлана Мохова</text>
<use href="#mic" x="1617" y="632"/><use href="#cam" x="1649" y="632"/>

<circle cx="1359" cy="687" r="14.700" fill="#a765c0"/><text class="av" x="1359" y="693">ТБ</text>
<text class="n" x="1384" y="692.500" textLength="137" lengthAdjust="spacingAndGlyphs">Татьяна Бондарева</text>
<use href="#mic" x="1617" y="687"/><use href="#cam" x="1649" y="687"/>

<clipPath id="a12"><circle cx="1359" cy="742" r="14.700"/></clipPath>
<g clip-path="url(#a12)"><rect x="1344" y="727" width="30" height="30" fill="#a9a9a4"/><ellipse cx="1361" cy="741" rx="9" ry="12" fill="#18141a"/><ellipse cx="1358" cy="740" rx="4.500" ry="6" fill="#d8b3a0"/><ellipse cx="1358" cy="756" rx="9" ry="4" fill="#ef5fa0"/></g>
<text class="n" x="1384" y="747.500" textLength="110" lengthAdjust="spacingAndGlyphs">Юлия Клестова</text>
<use href="#mic" x="1617" y="742"/><use href="#cam" x="1649" y="742"/>

<circle cx="1359" cy="796" r="14.700" fill="#cd4f38"/><text class="av" x="1359" y="802" textLength="29" lengthAdjust="spacingAndGlyphs">ЮМ</text>
<text class="n" x="1384" y="801.500" textLength="121" lengthAdjust="spacingAndGlyphs">Юлия Мачтакова</text>
<use href="#cam" x="1649" y="796"/>

<rect x="1311" y="821" width="363" height="1" fill="#ececf0"/>
<rect x="1366.500" y="837" width="94.500" height="29" rx="8" fill="#f4f4f8"/>
<text x="1376" y="857" font-size="14" fill="#2e2e38" textLength="77" lengthAdjust="spacingAndGlyphs">Пригласить</text>
<rect x="1516.500" y="837" width="104.500" height="29" rx="8" fill="#f4f4f8"/>
<text x="1526" y="857" font-size="14" fill="#2e2e38" textLength="75" lengthAdjust="spacingAndGlyphs">Подробнее</text>
<path d="M1603.500 850l4 4 4-4" fill="none" stroke="#2e2e38" stroke-width="1.600"/>
</svg>
</body></html>
